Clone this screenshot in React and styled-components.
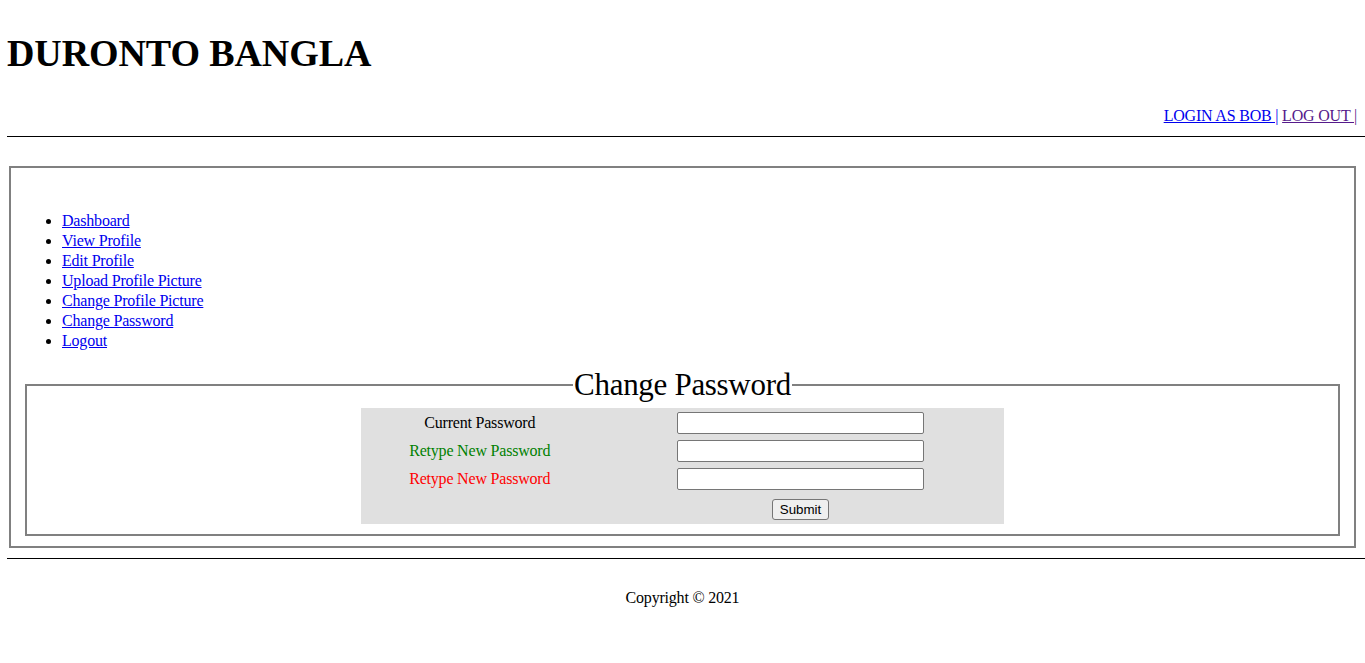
import React from "react";
import styled, { createGlobalStyle } from "styled-components";

const Global = createGlobalStyle`
  html, body { margin: 0; padding: 0; background: #fff; }
  body {
    font-family: "Liberation Serif", "Times New Roman", serif;
    font-size: 16px;
    letter-spacing: -0.2px;
    color: #000;
  }
`;

const Page = styled.div`
  padding: 0 8px;
`;

const Header = styled.header`
  display: block;
`;

const Title = styled.h1`
  margin: 31px 0 0 -1px;
  font-size: 38px;
  line-height: 44px;
  font-weight: bold;
  letter-spacing: -0.1px;
`;

const TopLinks = styled.div`
  margin-top: 31px;
  text-align: right;
  line-height: 20px;
`;

const Link = styled.a`
  color: ${(p) => (p.$visited ? "#551a8b" : "#0000ee")};
  text-decoration: underline;
`;

const Rule = styled.div`
  height: 0;
  border-top: 1px solid #000;
  margin: ${(p) => p.$margin} -8px 0 -1px;
`;

const Outer = styled.div`
  margin: 29px 1px 0;
  padding: 5.6px 12px 10px;
  border: 2px solid #808080;
`;

const Nav = styled.ul`
  margin: 37px 0 16px;
  padding-left: 39px;
  list-style: disc;
`;

const NavItem = styled.li`
  line-height: 20px;
`;

const Inner = styled.fieldset`
  margin: 0 2px;
  padding: 5.6px 12px 10px;
  border: 2px solid #808080;
  min-width: 0;
`;

const Legend = styled.legend`
  margin: 0 auto;
  padding: 0 1px 1px;
  font-size: 31px;
  line-height: 35px;
  letter-spacing: -0.3px;
`;

const Form = styled.form`
  width: 50%;
  margin: 0 auto;
  background: #e0e0e0;
  padding: 2px;
  box-sizing: border-box;
  display: grid;
  grid-template-columns: 234px 1fr;
  grid-template-rows: 26px 26px 26px 28px;
  gap: 2px;
`;

const Label = styled.label`
  display: flex;
  align-items: center;
  justify-content: center;
  color: ${(p) => p.$color || "#000"};
`;

const Cell = styled.div`
  display: flex;
  align-items: ${(p) => (p.$bottom ? "flex-end" : "center")};
  justify-content: center;
  grid-column: ${(p) => (p.$bottom ? "2" : "auto")};
`;

const Input = styled.input`
  box-sizing: border-box;
  width: 247px;
  height: 22px;
  border: 1px solid #767676;
  border-radius: 2px;
  background: #fff;
  padding: 1px 2px;
  margin: 0;
`;

const Button = styled.button`
  box-sizing: border-box;
  width: 57px;
  height: 21px;
  margin: 0 0 2px;
  padding: 1px 6px;
  border: 1px solid #767676;
  border-radius: 3px;
  background: #efefef;
  font-family: "Liberation Sans", Arial, sans-serif;
  font-size: 13.33px;
  letter-spacing: 0;
  color: #000;
`;

const Footer = styled.footer`
  margin-top: 29px;
  text-align: center;
  line-height: 20px;
`;

const navItems = [
  "Dashboard",
  "View Profile",
  "Edit Profile",
  "Upload Profile Picture",
  "Change Profile Picture",
  "Change Password",
  "Logout",
];

export default function App() {
  return (
    <Page>
      <Global />
      <Header>
        <Title>DURONTO BANGLA</Title>
        <TopLinks>
          <Link href="#">LOGIN AS BOB |</Link> <Link href="#" $visited>LOG OUT |</Link>
        </TopLinks>
      </Header>
      <Rule $margin="10px" />
      <Outer>
        <Nav>
          {navItems.map((t) => (
            <NavItem key={t}>
              <Link href="#">{t}</Link>
            </NavItem>
          ))}
        </Nav>
        <Inner>
          <Legend>Change Password</Legend>
          <Form onSubmit={(e) => e.preventDefault()}>
            <Label>Current Password</Label>
            <Cell><Input type="password" /></Cell>
            <Label $color="#008000">Retype New Password</Label>
            <Cell><Input type="password" /></Cell>
            <Label $color="#ff0000">Retype New Password</Label>
            <Cell><Input type="password" /></Cell>
            <Cell $bottom><Button type="submit">Submit</Button></Cell>
          </Form>
        </Inner>
      </Outer>
      <Rule $margin="10px" />
      <Footer>Copyright © 2021</Footer>
    </Page>
  );
}
